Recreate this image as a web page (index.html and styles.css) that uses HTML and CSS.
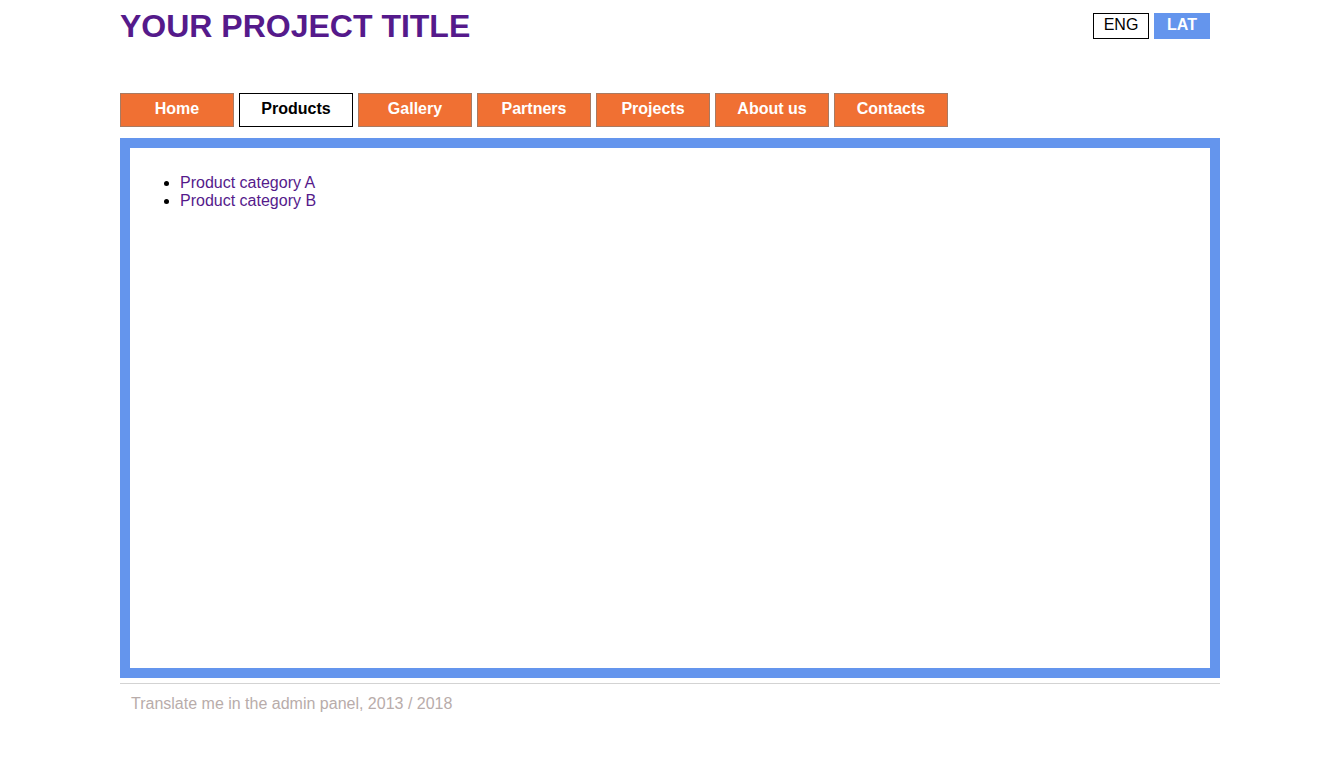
FILE: index.html
```html
<!DOCTYPE html>
<html>
<head>
<meta charset="utf-8">
<link rel="stylesheet" href="styles.css">
</head>
<body>
<div class="page">
  <header class="header">
    <h1 class="title"><a href="#">YOUR PROJECT TITLE</a></h1>
    <div class="langs">
      <a class="lang lang-active" href="#">ENG</a>
      <a class="lang lang-alt" href="#">LAT</a>
    </div>
  </header>
  <nav class="nav">
    <a class="nav-item" href="#">Home</a>
    <a class="nav-item nav-current" href="#">Products</a>
    <a class="nav-item" href="#">Gallery</a>
    <a class="nav-item" href="#">Partners</a>
    <a class="nav-item" href="#">Projects</a>
    <a class="nav-item" href="#">About us</a>
    <a class="nav-item" href="#">Contacts</a>
  </nav>
  <main class="content">
    <ul class="cats">
      <li><a href="#">Product category A</a></li>
      <li><a href="#">Product category B</a></li>
    </ul>
  </main>
  <footer class="footer">Translate me in the admin panel, 2013 / 2018</footer>
</div>
</body>
</html>
```
FILE: styles.css
```css
html, body {
  margin: 0;
  padding: 0;
  background: #fff;
}
body {
  font-family: "Liberation Sans", Arial, sans-serif;
  font-size: 16px;
  color: #000;
}
.page {
  width: 1100px;
  margin-left: 120px;
}
.header {
  display: flex;
  justify-content: space-between;
  align-items: flex-start;
  height: 93px;
}
.title {
  margin: 8px 0 0;
  font-size: 32px;
  font-weight: bold;
  line-height: 37px;
}
.title a {
  color: #551a8b;
  text-decoration: none;
}
.langs {
  display: flex;
  gap: 5px;
  margin-top: 13px;
  margin-right: 10px;
}
.lang {
  box-sizing: border-box;
  width: 56px;
  height: 26px;
  display: flex;
  align-items: center;
  justify-content: center;
  text-decoration: none;
  font-size: 16px;
  padding-bottom: 2px;
}
.lang-active {
  border: 1px solid #000;
  color: #000;
  background: #fff;
}
.lang-alt {
  background: #6495ed;
  color: #fff;
  font-weight: bold;
}
.nav {
  display: flex;
  gap: 5px;
  height: 34px;
}
.nav-item {
  box-sizing: border-box;
  width: 114px;
  height: 34px;
  display: flex;
  align-items: center;
  justify-content: center;
  padding-bottom: 2px;
  background: #f07033;
  border: 1px solid #a87a62;
  color: #fff;
  font-weight: bold;
  text-decoration: none;
}
.nav-current {
  background: #fff;
  border-color: #000;
  color: #000;
}
.content {
  box-sizing: border-box;
  margin-top: 11px;
  height: 540px;
  border: 10px solid #6495ed;
  padding: 10px;
}
.cats {
  margin: 16px 0 0;
  padding-left: 40px;
  line-height: 18px;
}
.cats a {
  color: #551a8b;
  text-decoration: none;
}
.footer {
  margin-top: 5px;
  border-top: 1px solid #d3d3d3;
  padding: 11px 11px 10px;
  color: #b8acaa;
  line-height: 18px;
}
```
